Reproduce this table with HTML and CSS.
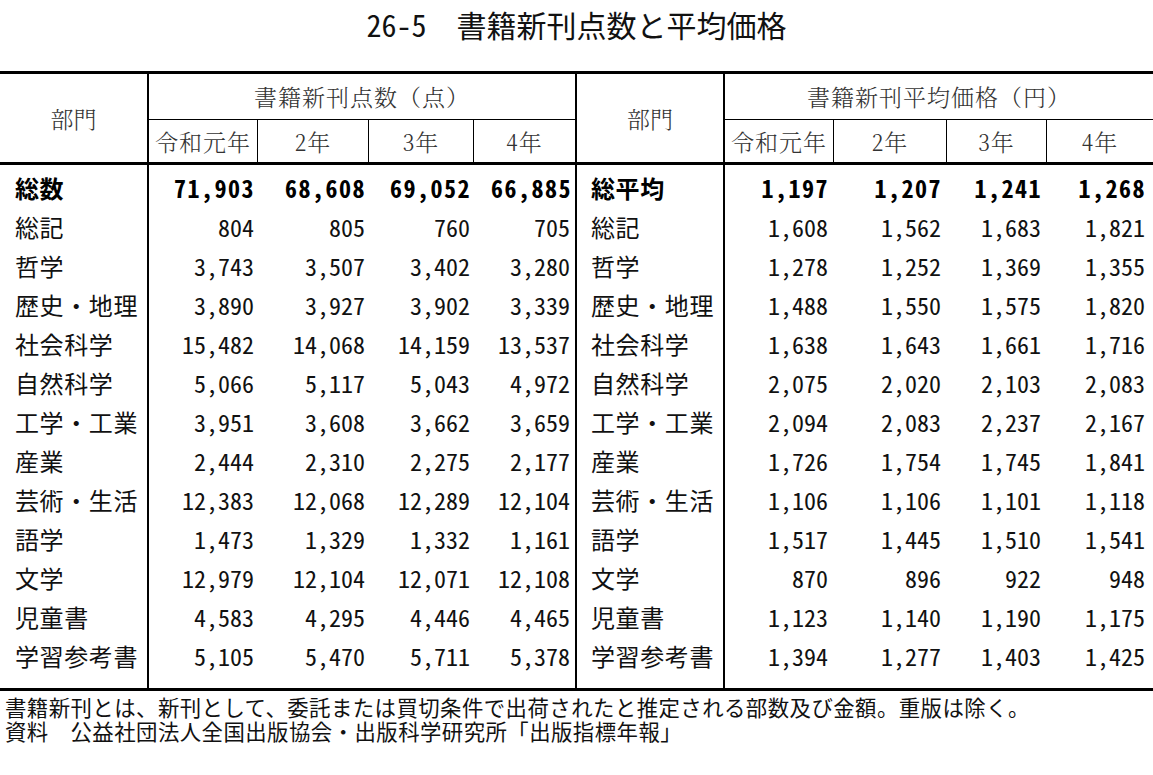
FILE: index.html
```html
<!DOCTYPE html>
<html lang="ja">
<head>
<meta charset="utf-8">
<title>26-5 書籍新刊点数と平均価格</title>
<link rel="stylesheet" href="styles.css">
</head>
<body>
<h1 class="title"><span class="hw">26-5</span>　書籍新刊点数と平均価格</h1>
<table class="stats">
  <colgroup>
    <col class="w149"><col class="w109"><col class="w111"><col class="w105"><col class="w103">
    <col class="w148"><col class="w109"><col class="w113"><col class="w100"><col class="w106">
  </colgroup>
  <thead>
    <tr class="h1">
      <th class="dept" rowspan="2">部門</th>
      <th class="group gl" colspan="4">書籍新刊点数（点）</th>
      <th class="dept" rowspan="2">部門</th>
      <th class="group" colspan="4">書籍新刊平均価格（円）</th>
    </tr>
    <tr class="h2">
      <th class="yr">令和元年</th><th class="yr"><span class="hw">2</span>年</th><th class="yr"><span class="hw">3</span>年</th><th class="yr yl"><span class="hw">4</span>年</th>
      <th class="yr">令和元年</th><th class="yr"><span class="hw">2</span>年</th><th class="yr"><span class="hw">3</span>年</th><th class="yr yr-end"><span class="hw">4</span>年</th>
    </tr>
  </thead>
  <tbody>
    <tr class="total first">
      <td class="cat">総数</td><td class="n">71,903</td><td class="n">68,608</td><td class="n">69,052</td><td class="n nl">66,885</td>
      <td class="cat cat2">総平均</td><td class="n r">1,197</td><td class="n r">1,207</td><td class="n r">1,241</td><td class="n r re">1,268</td>
    </tr>
    <tr>
      <td class="cat">総記</td><td class="n">804</td><td class="n">805</td><td class="n">760</td><td class="n nl">705</td>
      <td class="cat cat2">総記</td><td class="n r">1,608</td><td class="n r">1,562</td><td class="n r">1,683</td><td class="n r re">1,821</td>
    </tr>
    <tr>
      <td class="cat">哲学</td><td class="n">3,743</td><td class="n">3,507</td><td class="n">3,402</td><td class="n nl">3,280</td>
      <td class="cat cat2">哲学</td><td class="n r">1,278</td><td class="n r">1,252</td><td class="n r">1,369</td><td class="n r re">1,355</td>
    </tr>
    <tr>
      <td class="cat">歴史・地理</td><td class="n">3,890</td><td class="n">3,927</td><td class="n">3,902</td><td class="n nl">3,339</td>
      <td class="cat cat2">歴史・地理</td><td class="n r">1,488</td><td class="n r">1,550</td><td class="n r">1,575</td><td class="n r re">1,820</td>
    </tr>
    <tr>
      <td class="cat">社会科学</td><td class="n">15,482</td><td class="n">14,068</td><td class="n">14,159</td><td class="n nl">13,537</td>
      <td class="cat cat2">社会科学</td><td class="n r">1,638</td><td class="n r">1,643</td><td class="n r">1,661</td><td class="n r re">1,716</td>
    </tr>
    <tr>
      <td class="cat">自然科学</td><td class="n">5,066</td><td class="n">5,117</td><td class="n">5,043</td><td class="n nl">4,972</td>
      <td class="cat cat2">自然科学</td><td class="n r">2,075</td><td class="n r">2,020</td><td class="n r">2,103</td><td class="n r re">2,083</td>
    </tr>
    <tr>
      <td class="cat">工学・工業</td><td class="n">3,951</td><td class="n">3,608</td><td class="n">3,662</td><td class="n nl">3,659</td>
      <td class="cat cat2">工学・工業</td><td class="n r">2,094</td><td class="n r">2,083</td><td class="n r">2,237</td><td class="n r re">2,167</td>
    </tr>
    <tr>
      <td class="cat">産業</td><td class="n">2,444</td><td class="n">2,310</td><td class="n">2,275</td><td class="n nl">2,177</td>
      <td class="cat cat2">産業</td><td class="n r">1,726</td><td class="n r">1,754</td><td class="n r">1,745</td><td class="n r re">1,841</td>
    </tr>
    <tr>
      <td class="cat">芸術・生活</td><td class="n">12,383</td><td class="n">12,068</td><td class="n">12,289</td><td class="n nl">12,104</td>
      <td class="cat cat2">芸術・生活</td><td class="n r">1,106</td><td class="n r">1,106</td><td class="n r">1,101</td><td class="n r re">1,118</td>
    </tr>
    <tr>
      <td class="cat">語学</td><td class="n">1,473</td><td class="n">1,329</td><td class="n">1,332</td><td class="n nl">1,161</td>
      <td class="cat cat2">語学</td><td class="n r">1,517</td><td class="n r">1,445</td><td class="n r">1,510</td><td class="n r re">1,541</td>
    </tr>
    <tr>
      <td class="cat">文学</td><td class="n">12,979</td><td class="n">12,104</td><td class="n">12,071</td><td class="n nl">12,108</td>
      <td class="cat cat2">文学</td><td class="n r">870</td><td class="n r">896</td><td class="n r">922</td><td class="n r re">948</td>
    </tr>
    <tr>
      <td class="cat">児童書</td><td class="n">4,583</td><td class="n">4,295</td><td class="n">4,446</td><td class="n nl">4,465</td>
      <td class="cat cat2">児童書</td><td class="n r">1,123</td><td class="n r">1,140</td><td class="n r">1,190</td><td class="n r re">1,175</td>
    </tr>
    <tr class="last">
      <td class="cat">学習参考書</td><td class="n">5,105</td><td class="n">5,470</td><td class="n">5,711</td><td class="n nl">5,378</td>
      <td class="cat cat2">学習参考書</td><td class="n r">1,394</td><td class="n r">1,277</td><td class="n r">1,403</td><td class="n r re">1,425</td>
    </tr>
  </tbody>
</table>
<div class="notes">
  <p>書籍新刊とは、新刊として、委託または買切条件で出荷されたと推定される部数及び金額。重版は除く。</p>
  <p>資料　公益社団法人全国出版協会・出版科学研究所「出版指標年報」</p>
</div>
</body>
</html>
```
FILE: styles.css
```css
html, body {
  margin: 0;
  padding: 0;
  background: #ffffff;
}
body {
  width: 1153px;
  font-family: "Noto Sans CJK JP", "Noto Sans", sans-serif;
  color: #111111;
}
.hw {
  font-feature-settings: "hwid" 1;
}
.title {
  margin: 0;
  height: 48px;
  line-height: 48px;
  text-align: center;
  font-size: 30px;
  font-weight: 400;
  color: #111111;
}
.stats {
  margin-top: 23px;
  width: 1153px;
  table-layout: fixed;
  border-collapse: separate;
  border-spacing: 0;
  border-top: 3px solid #000;
  border-bottom: 3px solid #000;
}
.w149 { width: 149px; }
.w109 { width: 109px; }
.w111 { width: 111px; }
.w105 { width: 105px; }
.w103 { width: 103px; }
.w148 { width: 148px; }
.w113 { width: 113px; }
.w100 { width: 100px; }
.w106 { width: 106px; }
.stats th, .stats td {
  box-sizing: border-box;
  padding: 0;
  white-space: nowrap;
}
.stats th {
  font-family: "Noto Serif CJK JP", "Noto Sans CJK JP", serif;
  font-weight: 300;
  font-size: 23px;
  color: #333333;
  text-align: center;
  vertical-align: middle;
}
.h1 th {
  height: 46px;
}
.h2 th {
  height: 45px;
  border-bottom: 3px solid #000;
}
.stats th.dept {
  border-right: 2px solid #000;
  border-bottom: 3px solid #000;
}
.stats th.group {
  border-bottom: 1px solid #000;
  letter-spacing: 1px;
}
.stats th.gl {
  border-right: 2px solid #000;
}
.stats th.yr {
  border-right: 1px solid #000;
  letter-spacing: 1px;
}
.stats th.yl {
  border-right: 2px solid #000;
}
.stats th.yr-end {
  border-right: none;
}
.stats td {
  height: 39px;
  font-size: 24px;
  line-height: 39px;
  vertical-align: middle;
  color: #111111;
}
.stats td.cat {
  text-align: left;
  padding-left: 15px;
  border-right: 2px solid #000;
  letter-spacing: 0.6px;
}
.stats td.cat2 {
  padding-left: 14px;
}
.stats td.n {
  text-align: right;
  font-feature-settings: "hwid" 1;
  padding-right: 4px;
}
.stats td.nl {
  border-right: 2px solid #000;
  padding-right: 5px;
}
.stats td.r {
  padding-right: 6px;
}
.stats td.re {
  padding-right: 8px;
}
.stats .total td {
  font-weight: 700;
  color: #000;
}
.stats .total td.n {
  letter-spacing: 1.5px;
  padding-right: 3px;
}
.stats .total td.r {
  padding-right: 5px;
}
.stats .total td.re {
  padding-right: 7px;
}
.stats .first td {
  height: 42px;
  padding-top: 3px;
}
.stats .last td {
  height: 52px;
  padding-bottom: 13px;
}
.notes {
  margin-top: 4px;
  padding-left: 5px;
  font-size: 21.4px;
  line-height: 24px;
  letter-spacing: 0.45px;
  color: #111111;
}
.notes p {
  margin: 0;
}
```
